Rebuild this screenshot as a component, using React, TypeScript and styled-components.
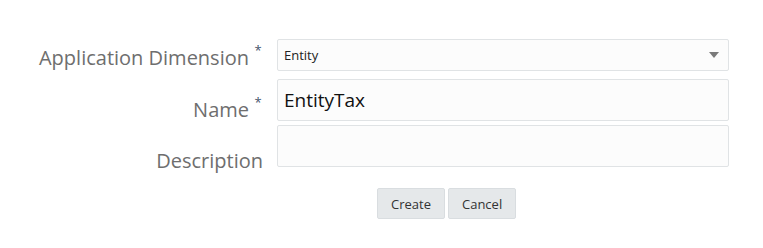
import React from "react";
import styled, { createGlobalStyle } from "styled-components";

const GlobalStyle = createGlobalStyle`
  body {
    margin: 0;
    background: #ffffff;
    font-family: "Open Sans", "Noto Sans", sans-serif;
  }
`;

const Form = styled.div`
  display: grid;
  grid-template-columns: 263px 452px;
  column-gap: 14px;
  padding-top: 39px;
`;

const Label = styled.label<{ $offset: number }>`
  display: flex;
  justify-content: flex-end;
  align-items: flex-start;
  padding-top: ${(p) => p.$offset}px;
  font-size: 20px;
  line-height: 24px;
  color: #6e6e6e;
  white-space: nowrap;
`;

const Required = styled.span`
  width: 10px;
  margin-left: 4px;
  text-align: center;
  font-size: 13px;
  line-height: 12px;
  color: #44546a;
  margin-top: -2px;
`;

const Field = styled.div<{ $gap: number }>`
  margin-bottom: ${(p) => p.$gap}px;
`;

const Select = styled.div`
  display: flex;
  align-items: center;
  justify-content: space-between;
  height: 32px;
  box-sizing: border-box;
  padding: 0 9px 0 6px;
  background: #fcfcfc;
  border: 1px solid #e0e3e5;
  border-radius: 2px;
  font-size: 13px;
  color: #222;
`;

const Caret = styled.span`
  width: 0;
  height: 0;
  border-left: 5px solid transparent;
  border-right: 5px solid transparent;
  border-top: 6px solid #7a7a7a;
`;

const Input = styled.div`
  height: 42px;
  box-sizing: border-box;
  padding: 0 6px;
  display: flex;
  align-items: center;
  background: #fcfcfc;
  border: 1px solid #e0e3e5;
  border-radius: 2px;
  font-size: 19px;
  color: #111;
`;

const Buttons = styled.div`
  grid-column: 2;
  display: flex;
  gap: 3px;
  padding-left: 100px;
  margin-top: 15px;
`;

const Button = styled.button`
  height: 31px;
  padding: 0 13px;
  background: #e5e8ea;
  border: 1px solid #d9dde0;
  border-radius: 2px;
  font-family: "Open Sans", "Noto Sans", sans-serif;
  font-size: 13px;
  color: #333;
`;

export default function App() {
  return (
    <>
      <GlobalStyle />
      <Form>
        <Label $offset={7}>
          Application Dimension<Required>*</Required>
        </Label>
        <Field $gap={8}>
          <Select>
            <span>Entity</span>
            <Caret />
          </Select>
        </Field>

        <Label $offset={19}>
          Name<Required>*</Required>
        </Label>
        <Field $gap={4}>
          <Input>EntityTax</Input>
        </Field>

        <Label $offset={24}>Description</Label>
        <Field $gap={0}>
          <Input />
        </Field>

        <Buttons>
          <Button>Create</Button>
          <Button>Cancel</Button>
        </Buttons>
      </Form>
    </>
  );
}
